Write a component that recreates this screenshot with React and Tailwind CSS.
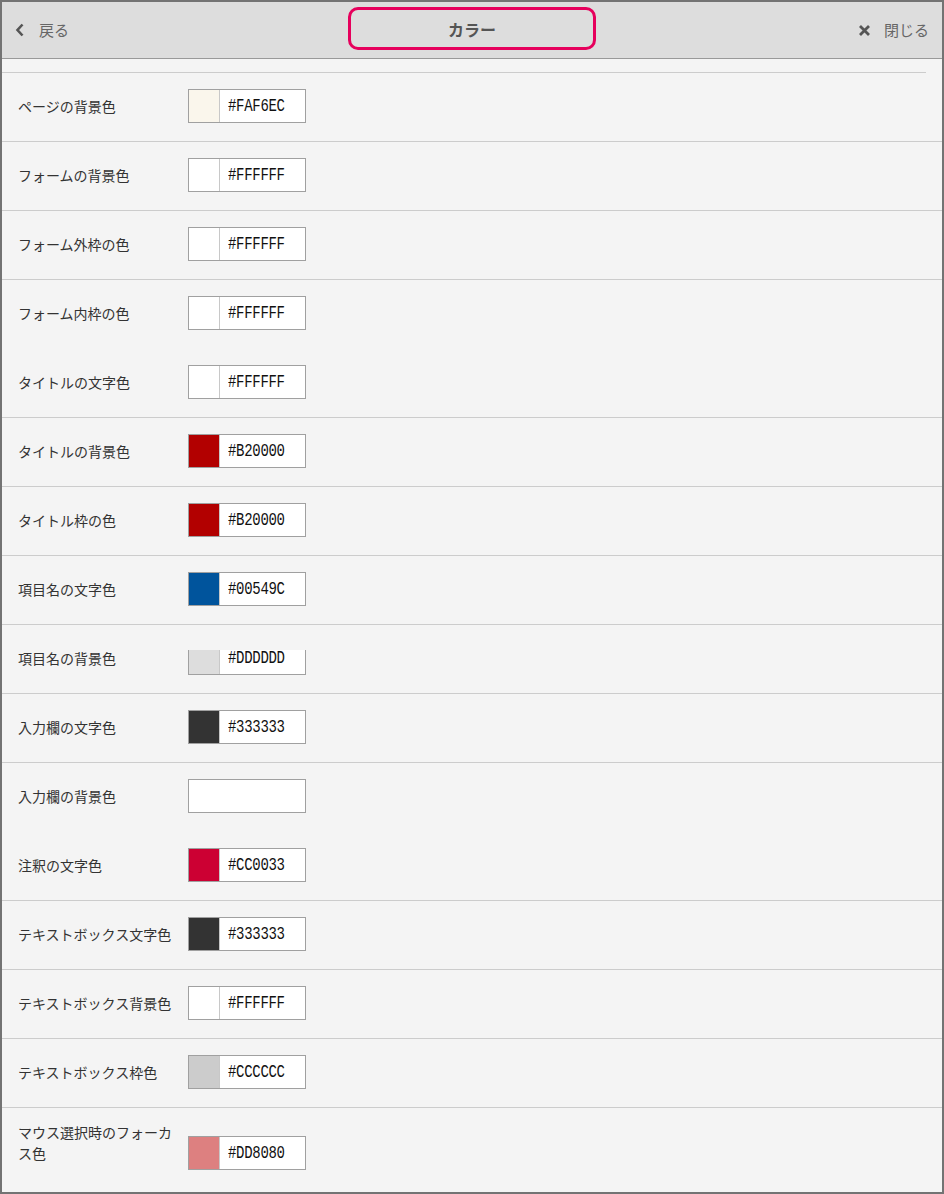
import React from "react";

const rows = [
  { label: "ページの背景色", color: "#FAF6EC", line: true },
  { label: "フォームの背景色", color: "#FFFFFF", line: true },
  { label: "フォーム外枠の色", color: "#FFFFFF", line: true },
  { label: "フォーム内枠の色", color: "#FFFFFF", line: false },
  { label: "タイトルの文字色", color: "#FFFFFF", line: true },
  { label: "タイトルの背景色", color: "#B20000", line: true },
  { label: "タイトル枠の色", color: "#B20000", line: true },
  { label: "項目名の文字色", color: "#00549C", line: true },
  { label: "項目名の背景色", color: "#DDDDDD", line: true, clipped: true },
  { label: "入力欄の文字色", color: "#333333", line: true },
  { label: "入力欄の背景色", color: null, line: false },
  { label: "注釈の文字色", color: "#CC0033", line: true },
  { label: "テキストボックス文字色", color: "#333333", line: true },
  { label: "テキストボックス背景色", color: "#FFFFFF", line: true },
  { label: "テキストボックス枠色", color: "#CCCCCC", line: true },
];

const labelFont = {
  fontFamily: '"Noto Sans CJK JP", "Noto Sans", sans-serif',
};

function ColorBox({ color }) {
  if (!color) {
    return <div className="w-[118px] h-[34px] border border-[#a0a0a0] bg-white" />;
  }
  return (
    <div className="flex w-[118px] h-[34px] border border-[#a0a0a0] bg-white">
      <div className="w-[31px] h-full border-r border-[#c8c8c8]" style={{ backgroundColor: color }} />
      <div className="flex items-center pl-[8px]">
        <span className="inline-block text-[14px] leading-none text-[#111111] scale-y-[1.25] font-['Liberation_Mono',monospace] tracking-[-0.3px]">
          {color}
        </span>
      </div>
    </div>
  );
}

export default function App() {
  return (
    <div className="w-[944px] h-[1194px] border-2 border-[#737373] bg-[#f4f4f4] overflow-hidden relative" style={labelFont}>
      <header className="h-[57px] bg-[#dddddd] border-b border-[#999999] flex items-center justify-between px-3 relative">
        <div className="flex items-center gap-[14px] text-[#666666] text-[15px]">
          <svg width="10" height="14" viewBox="0 0 10 14" className="ml-[1px]">
            <path d="M7.5 1.5 L2.5 7 L7.5 12.5" fill="none" stroke="#555" strokeWidth="2.6" />
          </svg>
          <span>戻る</span>
        </div>
        <div className="absolute left-1/2 -translate-x-1/2 top-[5px] w-[248px] h-[43px] border-[3px] border-[#e6005c] rounded-[10px] flex items-center justify-center">
          <span className="text-[16px] font-bold text-[#555555]">カラー</span>
        </div>
        <div className="flex items-center gap-[13px] text-[#666666] text-[15px] mr-[1px]">
          <svg width="13" height="13" viewBox="0 0 13 13">
            <path d="M2 2 L11 11 M11 2 L2 11" stroke="#555" strokeWidth="2.8" />
          </svg>
          <span>閉じる</span>
        </div>
      </header>
      <div className="mt-[13px] mr-[16px] border-t border-[#cccccc]" />
      {rows.map((r, i) => (
        <div
          key={i}
          className={`flex items-center h-[69px] pl-4 pb-[2px] ${r.line ? "border-b border-[#cccccc]" : "border-b border-transparent"}`}
        >
          <div className="w-[160px] mr-[10px] text-[14px] leading-[21px] text-[#333333]">{r.label}</div>
          {r.clipped ? (
            <div className="h-[25px] overflow-hidden flex items-end mt-[9px]">
              <ColorBox color={r.color} />
            </div>
          ) : (
            <ColorBox color={r.color} />
          )}
        </div>
      ))}
      <div className="flex items-start pl-4 h-[90px]">
        <div className="w-[160px] mr-[10px] pt-[14px] text-[14px] leading-[21px] text-[#333333]">
          マウス選択時のフォーカス色
        </div>
        <div className="mt-[28px]">
          <ColorBox color="#DD8080" />
        </div>
      </div>
    </div>
  );
}
